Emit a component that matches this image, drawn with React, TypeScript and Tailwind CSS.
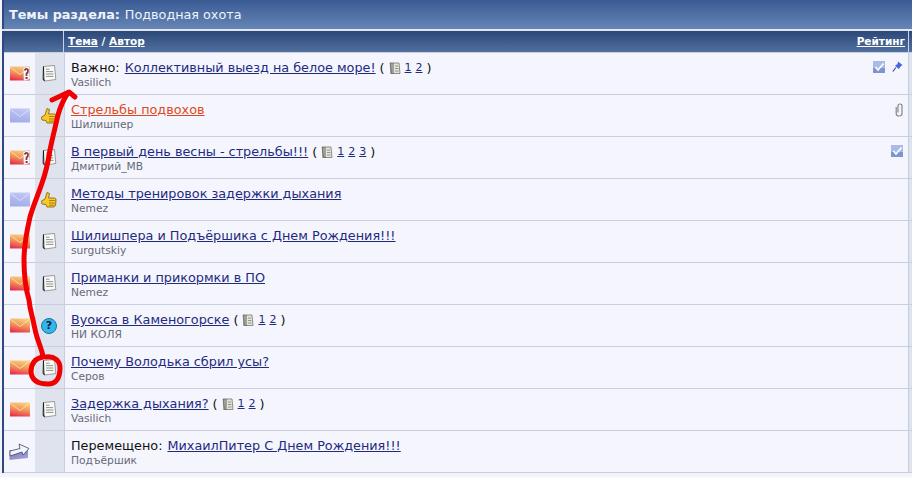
import React from "react";

type Topic = {
  status: "hotq" | "new" | "hot" | "moved";
  icon?: "doc" | "thumb" | "question";
  prefix?: string;
  title: string;
  author: string;
  pages?: number[];
  hot?: boolean;
  right?: ("check" | "pin" | "clip")[];
};

const topics: Topic[] = [
  { status: "hotq", icon: "doc", prefix: "Важно:", title: "Коллективный выезд на белое море!", author: "Vasilich", pages: [1, 2], right: ["check", "pin"] },
  { status: "new", icon: "thumb", title: "Стрельбы подвохов", author: "Шилишпер", hot: true, right: ["clip"] },
  { status: "hotq", icon: "doc", title: "В первый день весны - стрельбы!!!", author: "Дмитрий_МВ", pages: [1, 2, 3], right: ["check"] },
  { status: "new", icon: "thumb", title: "Методы тренировок задержки дыхания", author: "Nemez" },
  { status: "hot", icon: "doc", title: "Шилишпера и Подъёршика с Днем Рождения!!!", author: "surgutskiy" },
  { status: "hot", icon: "doc", title: "Приманки и прикормки в ПО", author: "Nemez" },
  { status: "hot", icon: "question", title: "Вуокса в Каменогорске", author: "НИ КОЛЯ", pages: [1, 2] },
  { status: "hot", icon: "doc", title: "Почему Володька сбрил усы?", author: "Серов" },
  { status: "hot", icon: "doc", title: "Задержка дыхания?", author: "Vasilich", pages: [1, 2] },
  { status: "moved", prefix: "Перемещено:", title: "МихаилПитер С Днем Рождения!!!", author: "Подъёршик" },
];

function Envelope({ status }: { status: Topic["status"] }) {
  if (status === "moved") {
    return (
      <svg width="21" height="19" viewBox="0 0 21 19">
        <defs>
          <linearGradient id="movedBody" x1="0" y1="0" x2="0.6" y2="1">
            <stop offset="0" stopColor="#6f7f9c" />
            <stop offset="1" stopColor="#a79be0" />
          </linearGradient>
        </defs>
        <path d="M0.5 8 L19 8 L19 16 L0.5 18 Z" fill="url(#movedBody)" />
        <path d="M1 9 L11 6.5 L10 2 L20 6.5 L14 13 L13 10 L1 14 Z" fill="#f4f5fa" stroke="#3e4a66" strokeWidth="0.8" strokeLinejoin="round" />
      </svg>
    );
  }
  const blue = status === "new";
  const id = blue ? "envBlue" : "envHot";
  return (
    <svg width="20" height="15" viewBox="0 0 20 15">
      <defs>
        <linearGradient id={id} x1="0.6" y1="0" x2="0.3" y2="1">
          <stop offset="0" stopColor={blue ? "#c2c8f4" : "#f7d080"} />
          <stop offset="0.5" stopColor={blue ? "#b0b8ee" : "#f39058"} />
          <stop offset="1" stopColor={blue ? "#a3ace8" : "#e52f50"} />
        </linearGradient>
      </defs>
      <rect x="0" y="0.5" width="20" height="14" fill={`url(#${id})`} />
      <path d="M0 1 L10 8.5 L20 1" fill="none" stroke={blue ? "#dde0fa" : "#fae4a6"} strokeWidth="0.9" />
      {status === "hotq" && (
        <g>
          <path d="M13 2 L19 0 L20 13 L14 15 Z" fill="#fbfbfb" stroke="#b8b4b8" strokeWidth="0.5" />
          <path d="M14.5 4.5 Q16.5 1.5 18 4 Q18.3 6.5 16.5 7.5 L16.5 10" fill="none" stroke="#8a3040" strokeWidth="1.7" />
          <rect x="15.6" y="11" width="2" height="2" fill="#8a3040" />
        </g>
      )}
    </svg>
  );
}

function DocIcon() {
  return (
    <svg width="15" height="17" viewBox="0 0 15 17">
      <path d="M1.5 1.5 L12.5 0.5 L13.8 14.5 L2.5 16 Z" fill="#fbfbf5" stroke="#77787c" strokeWidth="0.7" />
      <path d="M1.5 1.5 L1.2 14 L2.5 16" fill="none" stroke="#1c1c1c" strokeWidth="1.1" />
      <path d="M4 4.2 H7.5 M4 6.6 H11 M4 9 H11.3 M4.2 11.4 H11.5" stroke="#8e8f92" strokeWidth="1" />
    </svg>
  );
}

// little grey book-like icon in front of the page links
function PagesIcon() {
  return (
    <svg width="12" height="13" viewBox="0 0 12 13">
      <path d="M1 1 H10 L11 11.5 H2.5 Z" fill="#e4e4dc" stroke="#75756c" strokeWidth="0.8" />
      <path d="M2 0.8 V12 M4 1 V12" stroke="#5d5d56" strokeWidth="1" />
      <path d="M6 4 H9 M6 6.5 H9.4 M6 9 H9.6" stroke="#8b8b82" strokeWidth="0.9" />
    </svg>
  );
}

function TopicIcon({ icon }: { icon: Topic["icon"] }) {
  if (icon === "doc") return <DocIcon />;
  if (icon === "thumb") {
    return (
      <svg width="16" height="16" viewBox="0 0 16 16">
        <path d="M6 0.5 L8.5 1.5 L7.5 6 L13.5 6 Q15.5 6.5 15 8.5 L14.5 13.5 Q13.5 15.5 11.5 15 L6 15 L5 12.5 L1 12 L0.5 9 L4 7 Z" fill="#f7c92a" stroke="#8f6a10" strokeWidth="0.9" strokeLinejoin="round" />
        <path d="M8 8.5 H14.5 M8 11 H14 M8 13.2 H13.5" stroke="#a27612" strokeWidth="0.9" />
      </svg>
    );
  }
  if (icon === "question") {
    return (
      <span className="flex h-[16px] w-[16px] items-center justify-center rounded-full border border-[#17749e] bg-[#33b6ea] text-[11px] font-bold leading-none text-[#0e2238]">
        ?
      </span>
    );
  }
  return null;
}

function RightIcon({ kind }: { kind: "check" | "pin" | "clip" }) {
  if (kind === "check") {
    return (
      <svg width="12" height="12" viewBox="0 0 12 12">
        <rect x="0" y="0" width="12" height="12" fill="#a9bce8" />
        <rect x="0" y="7" width="12" height="5" fill="#7f94d2" />
        <path d="M2.5 6 L5 9 L10.5 2.5" fill="none" stroke="#ffffff" strokeWidth="1.6" />
      </svg>
    );
  }
  if (kind === "pin") {
    return (
      <svg width="11" height="11" viewBox="0 0 11 11">
        <path d="M6 0.5 L10.5 4 L8.8 5.2 L6.8 8 L3 4.8 L5.5 3 Z" fill="#4468d8" />
        <path d="M4 6.5 L0.8 10.5" stroke="#3a4a80" strokeWidth="1.2" />
      </svg>
    );
  }
  return (
    <svg width="8" height="14" viewBox="0 0 8 14">
      <path d="M1.2 4 V10.5 Q1.2 13 4 13 Q7 13 7 10.5 V3 Q7 1 4.8 1 Q3 1 3 3 V9.5" fill="none" stroke="#85868f" strokeWidth="1.2" />
    </svg>
  );
}

function Row({ t }: { t: Topic }) {
  return (
    <div className="flex h-[42px] border-b border-[#c9cde0]">
      <div className="flex w-[31px] shrink-0 items-center justify-center bg-[#f5f6fd]">
        <Envelope status={t.status} />
      </div>
      <div className="flex w-[29px] shrink-0 items-center justify-center bg-[#dfe3ee] pr-[1px]">
        <TopicIcon icon={t.icon} />
      </div>
      <div className="flex min-w-0 flex-1 border-l border-[#c9cde0] bg-[#f5f6fd] pl-[6px] pr-[5px]">
        <div className="flex-1 pt-[7px]">
          <div className="flex h-[16px] items-center whitespace-nowrap text-[12.8px] leading-[16px] text-[#111]">
            {t.prefix && <span className="mr-[5px]">{t.prefix}</span>}
            <a className={t.hot ? "text-[#e0481c] underline" : "text-[#1f2a80] underline"}>{t.title}</a>
            {t.pages && (
              <span className="ml-[4px] flex items-center gap-[4px]">
                <span>(</span>
                <PagesIcon />
                {t.pages.map((p) => (
                  <a key={p} className="text-[11px] text-[#1f2a80] underline">{p}</a>
                ))}
                <span>)</span>
              </span>
            )}
          </div>
          <div className="text-[10.7px] leading-[13px] text-[#666a78]">{t.author}</div>
        </div>
        {t.right && (
          <div className="flex items-start gap-[7px] pt-[8px]">
            {t.right.map((r) => (
              <RightIcon key={r} kind={r} />
            ))}
          </div>
        )}
      </div>
      <div className="w-[4px] shrink-0 border-l border-[#c9cde0] bg-[#dfe3ee]" />
    </div>
  );
}

export default function App() {
  return (
    <div className="relative h-[477px] w-[912px] overflow-hidden bg-[#f2f4fa] pl-[2px]" style={{ fontFamily: '"DejaVu Sans", Verdana, sans-serif' }}>
      <div className="flex h-[29px] items-center border-l-2 border-[#2f4a82] bg-gradient-to-b from-[#3a5a94] to-[#6686b6] pl-[5px] text-[12.75px] text-[#f0f4fa]">
        <span className="font-bold">Темы раздела:</span>
        <span className="ml-[5px]">Подводная охота</span>
      </div>
      <div className="h-[2px] bg-[#dfe5f2]" />
      <div className="border-l-2 border-[#2f4a82]">
        <div className="flex h-[22px] border-b border-[#c9cde0] bg-gradient-to-b from-[#2c4778] to-[#50709f] text-[10.5px] font-bold text-white">
          <div className="w-[60px] shrink-0 border-r border-[#c9d3e6]" />
          <div className="flex flex-1 items-center justify-between pl-[4px] pr-[3px] pt-[1px]">
            <span>
              <a className="underline">Тема</a> / <a className="underline">Автор</a>
            </span>
            <a className="underline">Рейтинг</a>
          </div>
          <div className="w-[4px] shrink-0 border-l border-[#c9d3e6]" />
        </div>
        {topics.map((t) => (
          <Row key={t.title} t={t} />
        ))}
      </div>
      <svg className="pointer-events-none absolute left-0 top-0" width="912" height="477" viewBox="0 0 912 477">
        <g fill="none" stroke="#f00000" strokeLinecap="round" strokeLinejoin="round" strokeWidth="5">
          <path d="M68 93 C63 100 60 108 58 115 C55 128 52 140 50 150 C48 163 46 172 42 183 C38 195 33 206 30 217 C27 230 24 245 24 260 C24 275 26 290 29 300 C30 310 32 315 33 320 C35 330 36 335 38 340 C40 346 42 351 43 356" />
          <path d="M52 100 L69 92 L75 97" />
          <path d="M43 357 C35 358 31 364 31 372 C32 382 40 384 48 384 C56 384 60 378 60 368 C60 360 54 356 46 357" />
        </g>
      </svg>
    </div>
  );
}
